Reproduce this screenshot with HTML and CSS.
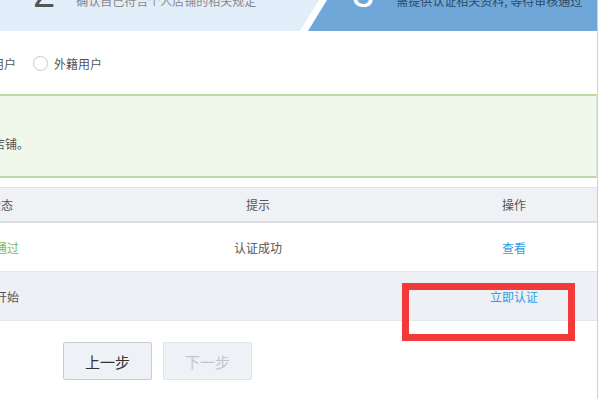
FILE: index.html
```html
<!DOCTYPE html>
<html lang="zh-CN">
<head>
    <meta charset="UTF-8">
    <meta name="viewport" content="width=device-width, initial-scale=1.0">
    <title>个人店铺认证</title>
    <link rel="stylesheet" href="styles.css">
</head>
<body>
    <div class="page">
        <!-- Steps -->
        <div class="steps">
            <div class="step-done">
                <div class="step-body">
                    <span class="step-num">2</span>
                    <span class="step-text">确认自己符合个人店铺的相关规定</span>
                </div>
            </div>
            <div class="step-cur">
                <span class="step-num">3</span>
                <span class="step-text">需提供认证相关资料, 等待审核通过</span>
            </div>
        </div>

        <!-- User type -->
        <div class="user-type">
            <label class="radio"><span class="radio-dot"></span>个人用户</label>
            <label class="radio"><span class="radio-dot"></span>外籍用户</label>
        </div>

        <!-- Notice -->
        <div class="notice">
            <p>温馨提示：</p>
            <p>一个身份证只能开通一家个人店铺。</p>
        </div>

        <!-- Auth list -->
        <table class="auth-table">
            <thead>
                <tr><th class="col-state">状态</th><th class="col-tip">提示</th><th class="col-op">操作</th></tr>
            </thead>
            <tbody>
                <tr>
                    <td class="ok">已通过</td>
                    <td>认证成功</td>
                    <td><a href="#" class="link">查看</a></td>
                </tr>
                <tr class="alt">
                    <td>未开始</td>
                    <td></td>
                    <td><a href="#" class="link">立即认证</a></td>
                </tr>
            </tbody>
        </table>

        <div class="actions">
            <button class="btn">上一步</button>
            <button class="btn" disabled>下一步</button>
        </div>

        <!-- annotation -->
        <div class="mark"></div>
    </div>
</body>
</html>
```

FILE: styles.css
```css
html, body { margin: 0; padding: 0; background: #fff; font-family: "Noto Sans CJK SC", "Liberation Sans", sans-serif; font-size: 12px; color: #555; }
.page { position: relative; width: 597px; height: 399px; overflow: hidden; border-right: 1px solid #cfcfcf; }

/* steps */
.steps { display: flex; height: 31px; background: #6fa7d9; overflow: hidden; }
.step-done { flex: 0 0 327px; background: #fff; clip-path: polygon(0 0, 100% 0, calc(100% - 19px) 100%, 0 100%); }
.step-body { width: 319px; height: 31px; background: #e3eefb; clip-path: polygon(0 0, 100% 0, calc(100% - 19px) 100%, 0 100%); display: flex; padding-left: 33px; box-sizing: border-box; }
.step-num { font-family: "Liberation Sans", sans-serif; font-size: 40px; line-height: 40px; margin-top: -27px; color: #555; }
.step-text { font-size: 12px; line-height: 12px; margin-top: -5px; margin-left: 21px; color: #8a8a8a; white-space: nowrap; }
.step-cur { display: flex; padding-left: 25px; }
.step-cur .step-num { color: #fff; }
.step-cur .step-text { color: #2d4a68; margin-left: 22px; }

/* radios */
.user-type { display: flex; gap: 17px; margin: 22px 0 0 -53px; height: 20px; align-items: center; }
.radio { display: flex; align-items: center; gap: 6px; color: #555; }
.radio-dot { width: 13px; height: 13px; border: 1px solid #c4c8cf; border-radius: 50%; background: #fff; }

/* notice */
.notice { margin: 21px 0 0 -190px; padding: 10px 20px 20px 27px; background: #f0f8ec; border-top: 2px solid #bcdba4; border-bottom: 2px solid #bcdba4; border-right: 1px solid #d9e9cf; }
.notice p { margin: 0; line-height: 25px; color: #555; }

/* table */
.auth-table { margin: 9px 0 0 -83px; width: 680px; border-collapse: collapse; table-layout: fixed; }
.auth-table th, .auth-table td { text-align: center; font-weight: normal; padding: 0; }
.auth-table th { height: 33px; background: #eff1f5; border-top: 1px solid #dfe2e6; border-bottom: 2px solid #dadde2; color: #555; }
.auth-table td { height: 48px; border-bottom: 1px solid #e3e6ea; color: #555; }
.col-state { width: 168px; }
.col-tip { width: 346px; }
.col-op { width: 166px; }
.auth-table tr.alt td { background: #edf0f4; }
.auth-table td.ok { color: #7bb94e; }
.link { color: #2f9be3; text-decoration: none; }

/* buttons */
.actions { display: flex; gap: 11px; margin: 21px 0 0 63px; }
.btn { width: 89px; height: 38px; font-family: inherit; font-size: 15px; color: #333; background: #eef1f5; border: 1px solid #c8ccd2; border-radius: 2px; }
.btn:disabled { color: #c2c6cb; border-color: #dfe2e6; }

.mark { position: absolute; left: 402px; top: 283px; width: 173px; height: 58px; box-sizing: border-box; border: 7px solid #f23a3a; }
```
